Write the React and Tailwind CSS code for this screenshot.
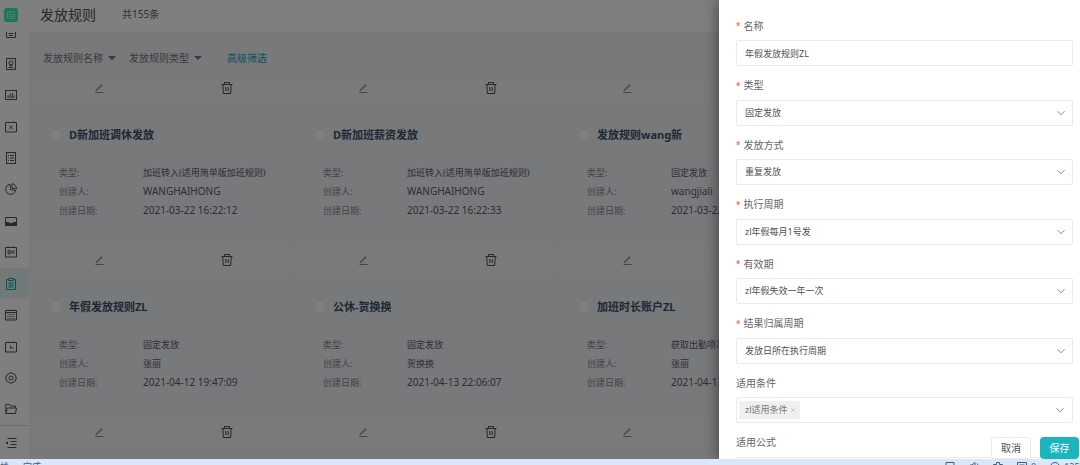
import { useState } from "react";

const icons = {
  person: (
    <>
      <rect x="1.5" y="0.5" width="9" height="11" />
      <circle cx="6" cy="4.8" r="2" />
      <path d="M5 6.5v1.3h2V6.5M3.5 9.5h5" />
    </>
  ),
  chart: (
    <>
      <rect x="0.5" y="1.5" width="11" height="9" />
      <path d="M3 8v-2M5 8v-3.5M5 5.5h1.5M7.5 4v4M9 8v-2M2.5 8.2h7" strokeWidth="0.8" />
    </>
  ),
  close: (
    <>
      <path d="M0.5 1.5h11v9.5h-11zM3 0.5v1.5M9 0.5v1.5M4.2 4.6l3.6 3.6M7.8 4.6L4.2 8.2" />
    </>
  ),
  list: (
    <>
      <rect x="1.5" y="0.5" width="9" height="11" />
      <path d="M3 3.5h1M5 3.5h4M3 6h1M5 6h4M3 8.5h1M5 8.5h4" />
    </>
  ),
  pie: (
    <>
      <path d="M5 1.3A5 5 0 1 0 10.6 7.5L5.5 6.5z" />
      <path d="M7 0.7v4.3l4.4 1A4.8 4.8 0 0 0 7 0.7z" />
    </>
  ),
  desk: (
    <>
      <path d="M0.5 8V2.5h11V8" />
      <path d="M0.5 7.5h3.5l.7 1h2.6l.7-1h3.5v3h-11z" fill="currentColor" />
    </>
  ),
  shift: (
    <>
      <path d="M0.5 1.5h11v9.5h-11zM3 0.5v1.5M9 0.5v1.5" />
      <path d="M3 4.3h2v3.7H3zM3 6h2M6.8 4v4M9 4v4M6.8 6H9" strokeWidth="0.8" />
    </>
  ),
  clipboard: (
    <>
      <path d="M3.5 1.5h-2v10h9v-10h-2M3.5 0.5h5v2h-5zM3.5 5h5M3.5 7h5M3.5 9h5" />
    </>
  ),
  calendar: (
    <>
      <path d="M0.5 1.5h11v9.5h-11zM3 0.5v1.5M6 0.5v1.5M9 0.5v1.5M0.5 3.5h11" />
      <path d="M2.5 5.5h7M2.5 7.5h7M2.5 9.3h7" strokeDasharray="1 1" />
    </>
  ),
  clock: (
    <>
      <path d="M0.5 1.5h11v9.5h-11zM3 0.5v1.5M9 0.5v1.5M5.5 4.5v2.5h3" />
    </>
  ),
  setting: (
    <>
      <path d="M6 0.6l4.2 2.2 1.1 3.2-1.1 3.2L6 11.4 1.8 9.2.7 6l1.1-3.2z" />
      <circle cx="6" cy="6" r="2" />
    </>
  ),
  folder: (
    <>
      <path d="M0.8 10.5v-9h3.7l1 1.5h5v2M0.8 10.5L2.2 5h9.3l-1 5.5z" />
    </>
  ),
  collapse: (
    <>
      <path d="M2.5 1.5h9M5.5 4.5h6M5.5 7.5h6M2.5 10.5h9" />
      <path d="M1 6l1.5-1v2z" fill="currentColor" />
    </>
  ),
};

const navItems = [
  "person",
  "chart",
  "close",
  "list",
  "pie",
  "desk",
  "shift",
  "clipboard",
  "calendar",
  "clock",
  "setting",
  "folder",
];

const rules = [
  { name: "D新加班调休发放", type: "加班转入(适用简单版加班规则)", creator: "WANGHAIHONG", date: "2021-03-22 16:22:12" },
  { name: "D新加班薪资发放", type: "加班转入(适用简单版加班规则)", creator: "WANGHAIHONG", date: "2021-03-22 16:22:33" },
  { name: "发放规则wang新", type: "固定发放", creator: "wangjiali", date: "2021-03-22 16:25:10" },
  { name: "年假发放规则ZL", type: "固定发放", creator: "张丽", date: "2021-04-12 19:47:09" },
  { name: "公休-贺换换", type: "固定发放", creator: "贺换换", date: "2021-04-13 22:06:07" },
  { name: "加班时长账户ZL", type: "获取出勤项次", creator: "张丽", date: "2021-04-13 22:10:41" },
];

const selects = [
  { id: "type", label: "类型", value: "固定发放" },
  { id: "mode", label: "发放方式", value: "重复发放" },
  { id: "cycle", label: "执行周期", value: "zl年假每月1号发" },
  { id: "valid", label: "有效期", value: "zl年假失效一年一次" },
  { id: "owner", label: "结果归属周期", value: "发放日所在执行周期" },
];

const Icon = ({ name }) => (
  <svg className="size-3" viewBox="0 0 12 12" fill="none" stroke="currentColor" strokeWidth="1">
    {icons[name]}
  </svg>
);

const Sidebar = () => (
  <aside className="flex w-[29px] shrink-0 flex-col bg-white text-[#505050]">
    <div className="flex h-8 shrink-0 items-center pb-0.5 pl-1">
      <svg className="size-3.5" viewBox="0 0 14 14" fill="none">
        <rect width="14" height="14" rx="2.5" fill="#38f0b4" />
        <path d="M3.5 4h7v6.5h-7zM5 3v1.5M9 3v1.5M5 6.5h4M5 8.5h4" stroke="#b4f4e2" />
      </svg>
    </div>
    <div className="flex h-4 shrink-0 items-start pl-[5px]">
      <svg className="h-1.5 w-3" viewBox="0 0 12 6" fill="none" stroke="currentColor">
        <path d="M1.5 0v5.5h9V0M3.5 1.5h5M4 3.5h4" />
      </svg>
    </div>
    <nav className="flex min-h-0 flex-1 flex-col">
      {navItems.map((name) => (
        <a
          key={name}
          href="#"
          aria-label={name}
          className={
            name === "clipboard"
              ? "flex flex-1 items-center bg-[#e2f3f3] pl-[5px] text-[#12a5a5]"
              : "flex flex-1 items-center pl-[5px]"
          }
        >
          <Icon name={name} />
        </a>
      ))}
    </nav>
    <button aria-label="collapse" className="flex h-[34px] shrink-0 items-center border-t border-[#ddd] pl-[5px]">
      <Icon name="collapse" />
    </button>
  </aside>
);

const CardActions = () => (
  <>
    <button aria-label="编辑" className="flex flex-1 justify-center border-r border-[#eceef1] text-[#8a8a8a]">
      <svg className="size-3" viewBox="0 0 12 12" fill="none" stroke="currentColor">
        <path d="M2.5 10.5h8M2.8 8.4L8.8 2.2M2.8 8.4l1.6-.3 5-5" />
      </svg>
    </button>
    <button aria-label="删除" className="flex flex-1 justify-center text-[#505050]">
      <svg className="size-3" viewBox="0 0 12 12" fill="none" stroke="currentColor">
        <path d="M0.5 2.5h11M3.5 2.5v-2h5v2M1.8 2.5l.5 9h7.4l.5-9M4.8 5v4M7.2 5v4" />
      </svg>
    </button>
  </>
);

const RuleCard = ({ rule }) => (
  <article className="text-[9px] leading-[19px]">
    <label className="mb-5 flex items-center gap-[7px] pt-3.5 pl-3.5 text-[11px] leading-4 font-bold text-[#3a5068]">
      <input type="checkbox" className="size-3 appearance-none rounded-xs border border-[#f0eeec] bg-white" />
      {rule.name}
    </label>
    <dl className="grid grid-cols-[84px_1fr] pb-[23px] pl-[23px] whitespace-nowrap">
      <dt className="text-[#888]">类型:</dt>
      <dd className="text-[#5a5e66]">{rule.type}</dd>
      <dt className="text-[#888]">创建人:</dt>
      <dd className={/^\w+$/.test(rule.creator) ? "text-[10px] text-[#5a5e66]" : "text-[#5a5e66]"}>{rule.creator}</dd>
      <dt className="text-[#888]">创建日期:</dt>
      <dd className="text-[10px] text-[#5a5e66]">{rule.date}</dd>
    </dl>
    <footer className="flex h-[34px] items-center bg-[#f2f4f7]">
      <CardActions />
    </footer>
  </article>
);

const FilterButton = ({ children }) => (
  <button className="flex items-center gap-[5px] text-[#777]">
    {children}
    <svg className="h-1 w-2" viewBox="0 0 8 4" fill="currentColor">
      <path d="M0 0h8L4 4z" />
    </svg>
  </button>
);

const Chevron = () => (
  <svg
    className="pointer-events-none absolute top-1/2 right-2 h-2 w-2 -translate-y-1/2"
    viewBox="0 0 8 8"
    fill="none"
    stroke="#888"
  >
    <path d="M0.5 2.2L4 5.8l3.5-3.6" />
  </svg>
);

const FieldLabel = ({ id, required, children }) => (
  <label htmlFor={id} className="mb-1.5 flex h-4 items-center gap-[3px] text-[10px] text-[#666]">
    {required && <span className="text-[8px] text-[#f0532d]">*</span>}
    {children}
  </label>
);

const RuleDrawer = () => {
  const [name, setName] = useState("年假发放规则ZL");

  return (
    <section className="absolute inset-y-0 right-0 w-[361px] overflow-hidden bg-white pt-[18px] pr-[7px] pl-[17px] text-[#505050] shadow-[-3px_0_12px_rgba(0,0,0,0.35)]">
      <form className="grid h-[476px] auto-rows-fr">
        <div>
          <FieldLabel id="name" required>名称</FieldLabel>
          <input
            id="name"
            value={name}
            onChange={(e) => setName(e.target.value)}
            className="block h-[26px] w-full rounded-xs border border-[#ebebeb] px-2 text-[9px]"
          />
        </div>
        {selects.map((field) => (
          <div key={field.id}>
            <FieldLabel id={field.id} required>{field.label}</FieldLabel>
            <div className="relative">
              <select
                id={field.id}
                className="block h-[26px] w-full appearance-none rounded-xs border border-[#ebebeb] bg-white px-2 text-[9px]"
              >
                <option>{field.value}</option>
              </select>
              <Chevron />
            </div>
          </div>
        ))}
        <div>
          <FieldLabel id="condition">适用条件</FieldLabel>
          <div className="relative flex h-[26px] items-center rounded-xs border border-[#ebebeb] px-0.5">
            <button
              id="condition"
              type="button"
              className="flex h-[18px] items-center gap-0.5 bg-[#f0f0f0] pr-1 pl-1.5 text-[9px] text-[#777]"
            >
              zl适用条件
              <svg className="size-1.5" viewBox="0 0 6 6" stroke="#ccc">
                <path d="M1 1l4 4M5 1L1 5" />
              </svg>
            </button>
            <Chevron />
          </div>
        </div>
        <div>
          <FieldLabel id="formula">适用公式</FieldLabel>
          <input id="formula" className="block h-[26px] w-full rounded-xs border border-[#ebebeb] px-2 text-[9px]" />
        </div>
      </form>
      <div className="absolute right-px bottom-0 flex gap-[9px] text-[10px]">
        <button className="h-[22px] w-10 rounded-xs border border-[#ebebeb] bg-white">取消</button>
        <button className="h-[22px] w-[39px] rounded-sm bg-[#1bb5bd] text-white">保存</button>
      </div>
    </section>
  );
};

const StatusBar = () => (
  <footer className="flex h-1.5 shrink-0 items-start overflow-hidden bg-[#d9e7f9] pt-[3px] text-[9px] leading-[10px] text-[#3c6288]">
    <span>栈</span>
    <span className="ml-3.5">完成</span>
    <div className="ml-auto flex w-[135px] items-start gap-3.5 whitespace-nowrap">
      <svg className="size-2.5 shrink-0" viewBox="0 0 10 10" fill="none" stroke="currentColor">
        <path d="M1 0.5h8v6L5 9.5 1 6.5z" />
      </svg>
      <svg className="size-2.5 shrink-0" viewBox="0 0 10 10" fill="none" stroke="currentColor">
        <path d="M1 3h2l3-2.5v9L3 7H1zM8 1.5c1.5 1 1.5 5 0 6" />
      </svg>
      <svg className="size-2.5 shrink-0" viewBox="0 0 10 10" fill="none" stroke="currentColor">
        <path d="M3.5 0.5h3v2h3v2h-9v-2h3zM2 4.5v5h6v-5" />
      </svg>
      <span className="flex gap-1">
        <svg className="size-2.5 shrink-0" viewBox="0 0 10 10" fill="none" stroke="currentColor">
          <path d="M0.5 0.5h9v8h-9zM2.5 3h5" />
        </svg>
        0
      </span>
      <span className="flex gap-1">
        <svg className="size-2.5 shrink-0" viewBox="0 0 10 10" fill="none" stroke="currentColor">
          <circle cx="5" cy="5" r="4.5" />
        </svg>
        125%
      </span>
    </div>
  </footer>
);

const App = () => {
  return (
    <div className="flex h-screen flex-col overflow-hidden font-['Noto_Sans','Noto_Sans_CJK_SC',sans-serif]">
      <div className="relative flex min-h-0 flex-1 overflow-hidden">
        <Sidebar />
        <main className="flex min-w-0 flex-1 flex-col bg-[#f0f2f5]">
          <header className="flex h-8 shrink-0 items-center gap-[26px] bg-white pb-[3px] pl-[11px]">
            <h1 className="text-sm leading-7 text-[#505050]">发放规则</h1>
            <span className="text-[10px] text-[#666]">共155条</span>
          </header>
          <div className="flex h-12 shrink-0 items-center gap-[13px] pt-1 pl-3.5 text-[10px]">
            <FilterButton>发放规则名称</FilterButton>
            <FilterButton>发放规则类型</FilterButton>
            <a href="#" className="ml-3 text-[#12a5b5]">高级筛选</a>
          </div>
          <div className="grid min-h-0 flex-1 auto-rows-max grid-cols-[repeat(4,254px)] gap-x-2.5 gap-y-2 overflow-hidden pl-[7px]">
            {/* tail of the row scrolled under the filters */}
            {[0, 1, 2].map((i) => (
              <div key={i} className="flex h-[25px] items-start bg-[#f2f4f7] pt-0.5">
                <CardActions />
              </div>
            ))}
            {rules.map((rule, i) => (
              <div key={rule.name} className={i % 3 === 0 ? "col-start-1" : ""}>
                <RuleCard rule={rule} />
              </div>
            ))}
          </div>
        </main>
        <div className="absolute inset-0 bg-black/50" />
        <RuleDrawer />
      </div>
      <StatusBar />
    </div>
  );
};

export default App;
